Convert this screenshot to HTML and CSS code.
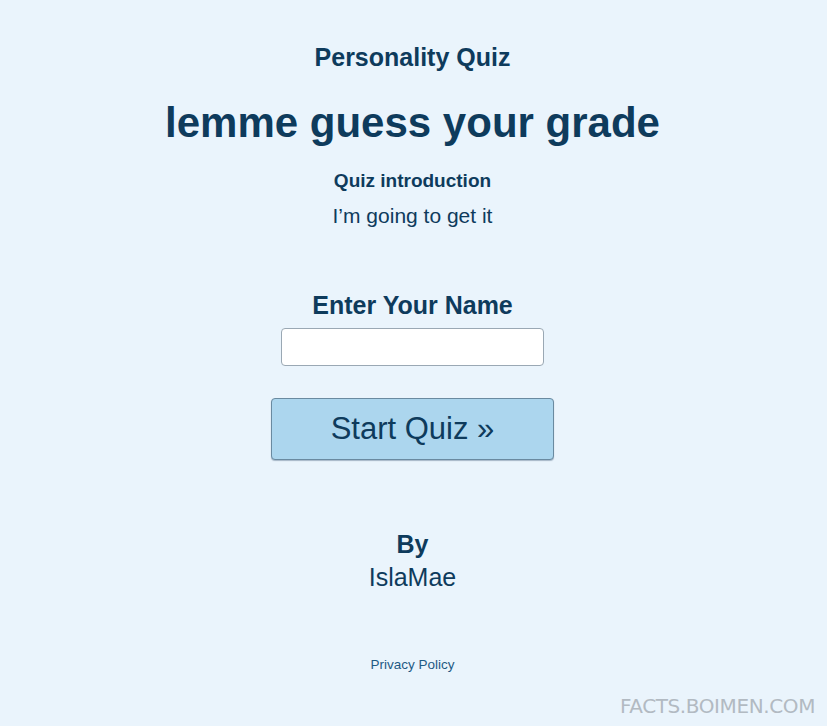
FILE: index.html
```html
<!DOCTYPE html>
<html>
<head>
<meta charset="utf-8">
<link rel="stylesheet" href="styles.css">
</head>
<body>
<div class="page">
  <h2 class="kicker">Personality Quiz</h2>
  <h1 class="title">lemme guess your grade</h1>
  <h3 class="intro-head">Quiz introduction</h3>
  <p class="intro">I’m going to get it</p>
  <label class="name-label" for="name">Enter Your Name</label>
  <input class="name-input" id="name" type="text">
  <button class="start">Start Quiz »</button>
  <div class="by">By</div>
  <div class="author">IslaMae</div>
  <a class="privacy" href="#">Privacy Policy</a>
</div>
<div class="watermark">FACTS.BOIMEN.COM</div>
</body>
</html>
```
FILE: styles.css
```css
html, body {
  margin: 0;
  padding: 0;
  background: #eaf4fc;
  height: 100%;
}
body {
  font-family: "Liberation Sans", Arial, sans-serif;
  color: #0e3b5c;
  position: relative;
  overflow: hidden;
}
.page {
  display: flex;
  flex-direction: column;
  align-items: center;
  text-align: center;
  padding-right: 2px;
}
.kicker {
  margin: 43px 0 0;
  font-size: 25px;
  font-weight: bold;
  line-height: 29px;
}
.title {
  margin: 27px 0 0;
  font-size: 42px;
  font-weight: bold;
  line-height: 48px;
}
.intro-head {
  margin: 23px 0 0;
  font-size: 19px;
  font-weight: bold;
  line-height: 22px;
}
.intro {
  margin: 12px 0 0;
  font-size: 21px;
  line-height: 24px;
}
.name-label {
  margin-top: 63px;
  font-size: 25px;
  font-weight: bold;
  line-height: 28px;
}
.name-input {
  margin-top: 9px;
  box-sizing: border-box;
  width: 263px;
  height: 38px;
  background: #fff;
  border: 1px solid #9aa8b4;
  border-radius: 4px;
  padding: 0 8px;
  font-size: 18px;
}
.start {
  margin-top: 32px;
  box-sizing: border-box;
  width: 283px;
  height: 62px;
  background: #acd6ee;
  border: 1px solid #6a8aa0;
  border-radius: 4px;
  box-shadow: 0 1px 1px rgba(40, 70, 100, 0.35);
  color: #0e3b5c;
  font-family: "Liberation Sans", Arial, sans-serif;
  font-size: 31px;
  line-height: 36px;
  padding: 0;
}
.by {
  margin-top: 70px;
  font-size: 25px;
  font-weight: bold;
  line-height: 28px;
}
.author {
  margin-top: 5px;
  font-size: 25px;
  line-height: 28px;
}
.privacy {
  margin-top: 66px;
  font-size: 13.5px;
  line-height: 16px;
  color: #1e5a84;
  text-decoration: none;
}
.watermark {
  position: absolute;
  right: 12px;
  bottom: 8px;
  font-family: "DejaVu Sans", Verdana, sans-serif;
  font-size: 20px;
  color: #b2bac2;
  letter-spacing: -0.4px;
}
```
